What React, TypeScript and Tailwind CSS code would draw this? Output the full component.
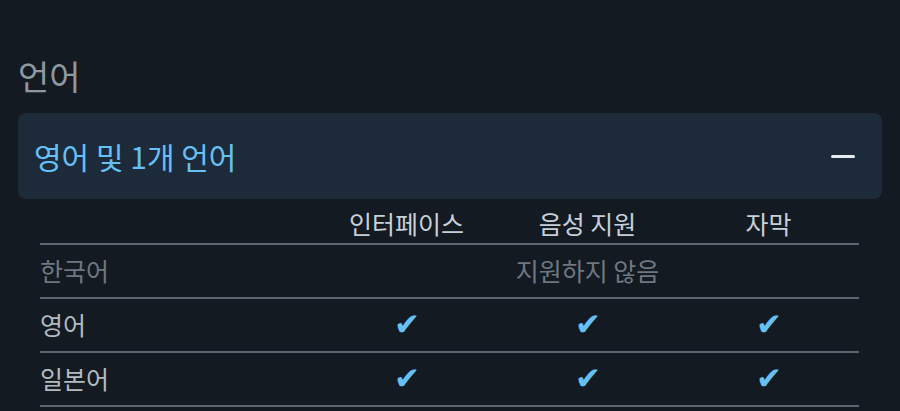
const rows = [
  { name: "영어", checks: [true, true, true] },
  { name: "일본어", checks: [true, true, true] },
];

function Check() {
  return <span className="text-[31px] leading-none text-[#66c0f4]">✔</span>;
}

export default function App() {
  return (
    <div
      className="h-[411px] w-[900px] overflow-hidden bg-[#131a22] px-[18px] pt-[52px]"
      style={{ fontFamily: '"Noto Sans CJK KR", "Noto Sans", sans-serif' }}
    >
      <h2 className="text-[34px] leading-[48px] text-[#8f98a0]">언어</h2>
      <div className="mt-[13px] flex h-[86px] items-center justify-between rounded-lg bg-[#1d2a3a] pl-4 pr-[27px]">
        <span className="text-[30px] text-[#66c0f4]">영어 및 1개 언어</span>
        <span className="block h-[3px] w-6 rounded-sm bg-[#e5eaee]" />
      </div>

      <table className="mx-[22px] mt-[6px] w-[819px] table-fixed border-collapse text-[25px]">
        <colgroup>
          <col className="w-[276px]" />
          <col />
          <col />
          <col />
        </colgroup>
        <thead>
          <tr className="h-[39px] border-b-2 border-[#5d6670] text-[#c7d0d8]">
            <th />
            <th className="font-normal">인터페이스</th>
            <th className="font-normal">음성 지원</th>
            <th className="font-normal">자막</th>
          </tr>
        </thead>
        <tbody>
          <tr className="h-[54px] border-b-2 border-[#5d6670] text-[#6f7780]">
            <td>한국어</td>
            <td colSpan={3} className="text-center">
              지원하지 않음
            </td>
          </tr>
          {rows.map((r) => (
            <tr key={r.name} className="h-[54px] border-b-2 border-[#5d6670]">
              <td className="text-[#b4bac0]">{r.name}</td>
              {r.checks.map((c, i) => (
                <td key={i} className="text-center">
                  {c && <Check />}
                </td>
              ))}
            </tr>
          ))}
        </tbody>
      </table>
    </div>
  );
}
